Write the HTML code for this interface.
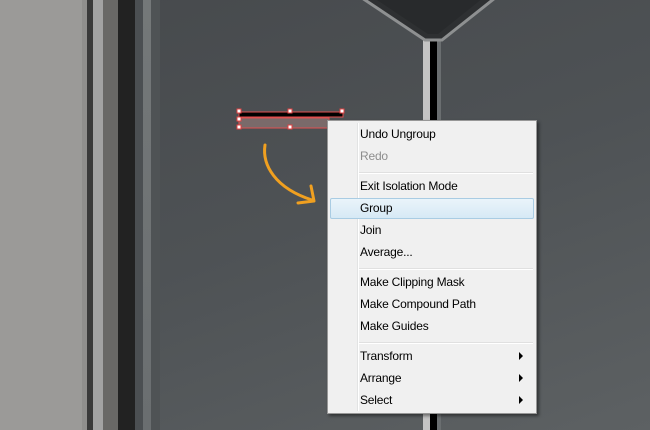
<!DOCTYPE html>
<html><head><style>
body{margin:0;width:650px;height:430px;overflow:hidden;position:relative;background:linear-gradient(160deg,#46494c 0%,#4e5255 50%,#5d6163 100%);font-family:"Segoe UI","Liberation Sans",sans-serif}
.s{position:absolute;top:0;height:430px}
.menu{position:absolute;left:327px;top:120px;width:208px;height:292px;background:#f0f0f0;border:1px solid #979797;box-shadow:2px 2px 3px rgba(0,0,0,.45)}
.gut{position:absolute;left:29px;top:2px;bottom:2px;width:1px;background:#e2e3e3;border-right:1px solid #fff}
.it{position:absolute;left:32px;font-size:12px;color:#000;line-height:22px;height:22px;letter-spacing:-0.2px}
.sep{position:absolute;left:31px;right:3px;height:1px;background:#e0e0e0;border-bottom:1px solid #fff}
.ar{position:absolute;left:191px;width:0;height:0;border-left:4px solid #000;border-top:4px solid transparent;border-bottom:4px solid transparent}
</style></head><body>
<div class="s" style="left:0;width:82px;background:#9b9a98"></div>
<div class="s" style="left:82px;width:5px;background:#908f8d"></div>
<div class="s" style="left:87px;width:6px;background:#3a3a3a"></div>
<div class="s" style="left:93px;width:10px;background:#a3a3a3"></div>
<div class="s" style="left:103px;width:15px;background:#696866"></div>
<div class="s" style="left:118px;width:17px;background:#222"></div>
<div class="s" style="left:135px;width:8px;background:#4b4f52"></div>
<div class="s" style="left:143px;width:8px;background:linear-gradient(#747879,#6a6e70)"></div>
<div class="s" style="left:151px;width:9px;background:#4f5355"></div>
<div class="s" style="left:423px;width:7px;background:#c4c4c4"></div>
<div class="s" style="left:430px;width:7px;background:#000"></div>
<div class="s" style="left:437px;width:4px;background:#6a6e70"></div>
<svg style="position:absolute;left:0;top:0" width="650" height="430">
<polygon points="362,-2 495,-2 442,40 425,40" fill="#2e3032" stroke="#8e9091" stroke-width="3"/>
<polygon points="374,-2 483,-2 438,34 428,34" fill="#282a2c"/>
<rect x="239" y="112" width="104" height="5" fill="#000" stroke="#e05050"/>
<rect x="239" y="118" width="90" height="10" fill="#7a6a6a" stroke="#e05050"/>
<g fill="#fff" stroke="#e04040" stroke-width="1">
<rect x="237" y="109" width="4" height="4"/><rect x="288" y="109" width="4" height="4"/><rect x="340" y="109" width="4" height="4"/>
<rect x="237" y="117" width="4" height="4"/><rect x="237" y="125" width="4" height="4"/><rect x="288" y="125" width="4" height="4"/>
</g>
<path d="M265,145 C262,165 275,188 312,200" fill="none" stroke="#f0a020" stroke-width="3" stroke-linecap="round"/>
<path d="M298,203 L314,201 L311,186" fill="none" stroke="#f0a020" stroke-width="3" stroke-linecap="round" stroke-linejoin="round"/>
</svg>
<div class="menu">
<div class="gut"></div>
<div class="it" style="top:2px">Undo Ungroup</div>
<div class="it" style="top:24px;color:#8d8d8d">Redo</div>
<div class="sep" style="top:51px"></div>
<div class="it" style="top:54px">Exit Isolation Mode</div>
<div style="position:absolute;left:2px;top:77px;width:202px;height:19px;border:1px solid #a9cce3;border-radius:2px;background:linear-gradient(#eaf4fa,#d6e9f5)"></div>
<div class="it" style="top:76px">Group</div>
<div class="it" style="top:98px">Join</div>
<div class="it" style="top:120px">Average...</div>
<div class="sep" style="top:147px"></div>
<div class="it" style="top:150px">Make Clipping Mask</div>
<div class="it" style="top:172px">Make Compound Path</div>
<div class="it" style="top:194px">Make Guides</div>
<div class="sep" style="top:221px"></div>
<div class="it" style="top:224px">Transform</div>
<div class="ar" style="top:231px"></div>
<div class="it" style="top:246px">Arrange</div>
<div class="ar" style="top:253px"></div>
<div class="it" style="top:268px">Select</div>
<div class="ar" style="top:275px"></div>
</div>
</body></html>
